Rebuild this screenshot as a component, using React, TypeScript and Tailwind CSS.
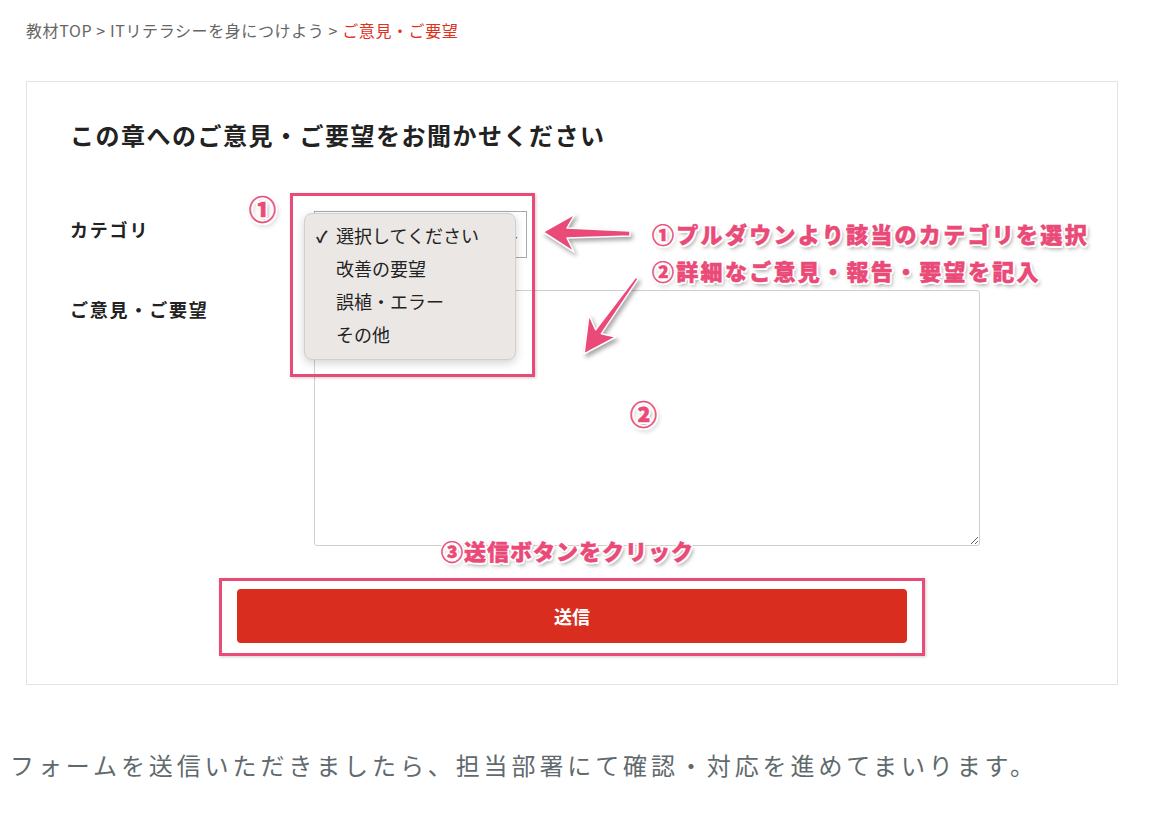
import { useState } from "react";

const pinkText =
  "font-black text-[#ea4a78] [-webkit-text-stroke:0.5px_#ea4a78] [text-shadow:2px_0_0_#fff,-2px_0_0_#fff,0_2px_0_#fff,0_-2px_0_#fff,1.5px_1.5px_0_#fff,-1.5px_-1.5px_0_#fff,1.5px_-1.5px_0_#fff,-1.5px_1.5px_0_#fff,2px_3px_4px_rgba(0,0,0,0.45)]";

const options = ["選択してください", "改善の要望", "誤植・エラー", "その他"];

function CategorySelect() {
  const [selected] = useState(0);
  return (
    <div className="relative w-[213px] h-[47px]">
      <div className="flex h-full w-full items-center justify-end border border-[#a9a9a9] bg-white pr-[6px] text-[13px] text-[#666]">
        ⌄
      </div>
      {/* native-looking popup, open */}
      <div className="absolute left-[-10px] top-[2px] z-10 w-[212px] rounded-[8px] border border-[#d3cfcc] bg-[#ebe7e4] pt-[5px] pb-[8px] shadow-[0_3px_10px_rgba(0,0,0,0.18)]">
        {options.map((o, i) => (
          <div key={o} className="flex h-[33px] items-center text-[18px] text-[#222]">
            <span className="w-[31px] pl-[11px] text-[16px] font-bold">{i === selected ? "✓" : ""}</span>
            <span>{o}</span>
          </div>
        ))}
      </div>
    </div>
  );
}

export default function App() {
  return (
    <div className="relative min-h-[832px] w-full bg-white font-['Noto_Sans_CJK_JP','Noto_Sans',sans-serif]">
      <nav className="pl-[26px] pt-[19px] text-[16px] leading-[22px] tracking-[0.6px] text-[#666]">
        教材TOP &gt; ITリテラシーを身につけよう &gt; <span className="text-[#e0301e]">ご意見・ご要望</span>
      </nav>

      <div className="ml-[26px] mt-[40px] w-[1092px] border border-[#e3e3e3] px-[43px] pb-[41px] pt-[37px]">
        <h2 className="text-[24px] font-bold leading-[32px] tracking-[1.5px] text-[#222]">
          この章へのご意見・ご要望をお聞かせください
        </h2>

        <div className="mt-[60px] grid grid-cols-[244px_1fr] gap-y-[32px]">
          <div className="pt-[5px] text-[18px] font-bold leading-[26px] tracking-[1.8px] text-[#222]">カテゴリ</div>
          <CategorySelect />

          <div className="pt-[6px] text-[18px] font-bold leading-[26px] tracking-[1.8px] text-[#222]">ご意見・ご要望</div>
          <textarea className="block h-[256px] w-[666px] rounded-[3px] border border-[#cfcfcf] bg-white" />
        </div>

        <div className="mt-[43px] flex justify-center">
          <button className="h-[54px] w-[670px] rounded-[4px] bg-[#d92e1f] text-[18px] font-bold text-white">
            送信
          </button>
        </div>
      </div>

      <p className="mt-[62px] pl-[10px] text-[24px] leading-[36px] tracking-[3.9px] text-[#5f6a6e]">
        フォームを送信いただきましたら、担当部署にて確認・対応を進めてまいります。
      </p>

      {/* annotations drawn over the screenshot */}
      <div className="pointer-events-none absolute left-[290px] top-[193px] z-20 h-[184px] w-[245px] border-[3px] border-[#ea4a78] shadow-[1px_1px_3px_rgba(0,0,0,0.2)]" />
      <div className="pointer-events-none absolute left-[219px] top-[578px] z-20 h-[78px] w-[706px] border-[3px] border-[#ea4a78] shadow-[1px_1px_3px_rgba(0,0,0,0.2)]" />

      <svg
        className="pointer-events-none absolute left-0 top-0 z-20 drop-shadow-[2px_3px_2px_rgba(0,0,0,0.35)]"
        width="1150"
        height="832"
        viewBox="0 0 1150 832"
      >
        <polygon
          points="543,232 575,214 567,228 630,231 630,236 567,238 574,252"
          fill="#ea4a78"
          stroke="#fff"
          strokeWidth="1.5"
          strokeLinejoin="round"
        />
        <polygon
          points="584,354 589,315 595.6,329.7 635.8,277.1 638.2,278.9 601.4,333.7 616,337"
          fill="#ea4a78"
          stroke="#fff"
          strokeWidth="1.5"
          strokeLinejoin="round"
        />
      </svg>

      <span className={`absolute left-[249px] top-[194px] z-30 text-[27px] leading-[30px] ${pinkText}`}>①</span>
      <span className={`absolute left-[630px] top-[399px] z-30 text-[27px] leading-[30px] ${pinkText}`}>②</span>
      <div className={`absolute left-[652px] top-[218px] z-30 whitespace-nowrap text-[22px] leading-[30px] tracking-[2.3px] ${pinkText}`}>
        ①プルダウンより該当のカテゴリを選択
      </div>
      <div className={`absolute left-[652px] top-[255px] z-30 whitespace-nowrap text-[22px] leading-[30px] tracking-[2.3px] ${pinkText}`}>
        ②詳細なご意見・報告・要望を記入
      </div>
      <div className={`absolute left-[441px] top-[535px] z-30 whitespace-nowrap text-[22px] leading-[30px] tracking-[1px] ${pinkText}`}>
        ③送信ボタンをクリック
      </div>
    </div>
  );
}
